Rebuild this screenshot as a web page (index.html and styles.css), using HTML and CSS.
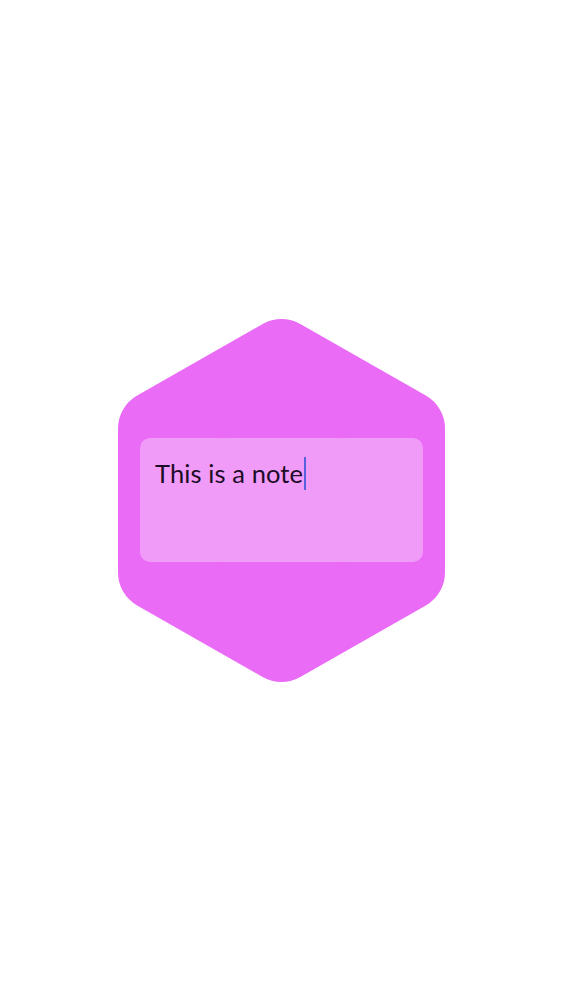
FILE: index.html
```html
<!DOCTYPE html>
<html>
<head>
<meta charset="utf-8">
<link rel="stylesheet" href="styles.css">
</head>
<body>
<main class="stage">
  <div class="hex">
    <svg class="hex-shape" width="327" height="363" viewBox="0 0 327 363">
      <polygon points="163.5,38 289,109.5 289,253.5 163.5,325 38,253.5 38,109.5"
               fill="#ea6bf6" stroke="#ea6bf6" stroke-width="76" stroke-linejoin="round"/>
    </svg>
    <div class="note">
      <p class="note-text">This is a note<span class="caret"></span></p>
    </div>
  </div>
</main>
</body>
</html>
```

FILE: styles.css
```css
html, body {
  margin: 0;
  padding: 0;
  background: #ffffff;
}

.stage {
  height: 1000px;
  display: flex;
  align-items: center;
  justify-content: center;
}

.hex {
  display: grid;
  width: 327px;
  height: 363px;
  place-items: center;
}

.hex-shape {
  grid-area: 1 / 1;
  display: block;
}

.note {
  grid-area: 1 / 1;
  width: 283px;
  height: 124px;
  box-sizing: border-box;
  padding: 19px 15px;
  border-radius: 10px;
  background: #f09bf8;
}

.note-text {
  margin: 0;
  font-family: "Lato", "Open Sans", sans-serif;
  font-size: 25.5px;
  line-height: 30px;
  letter-spacing: 0.1px;
  color: #1c0c26;
}

.caret {
  display: inline-block;
  width: 2px;
  height: 33px;
  margin-left: 1px;
  vertical-align: -7px;
  background: #5a5fe0;
}
```
